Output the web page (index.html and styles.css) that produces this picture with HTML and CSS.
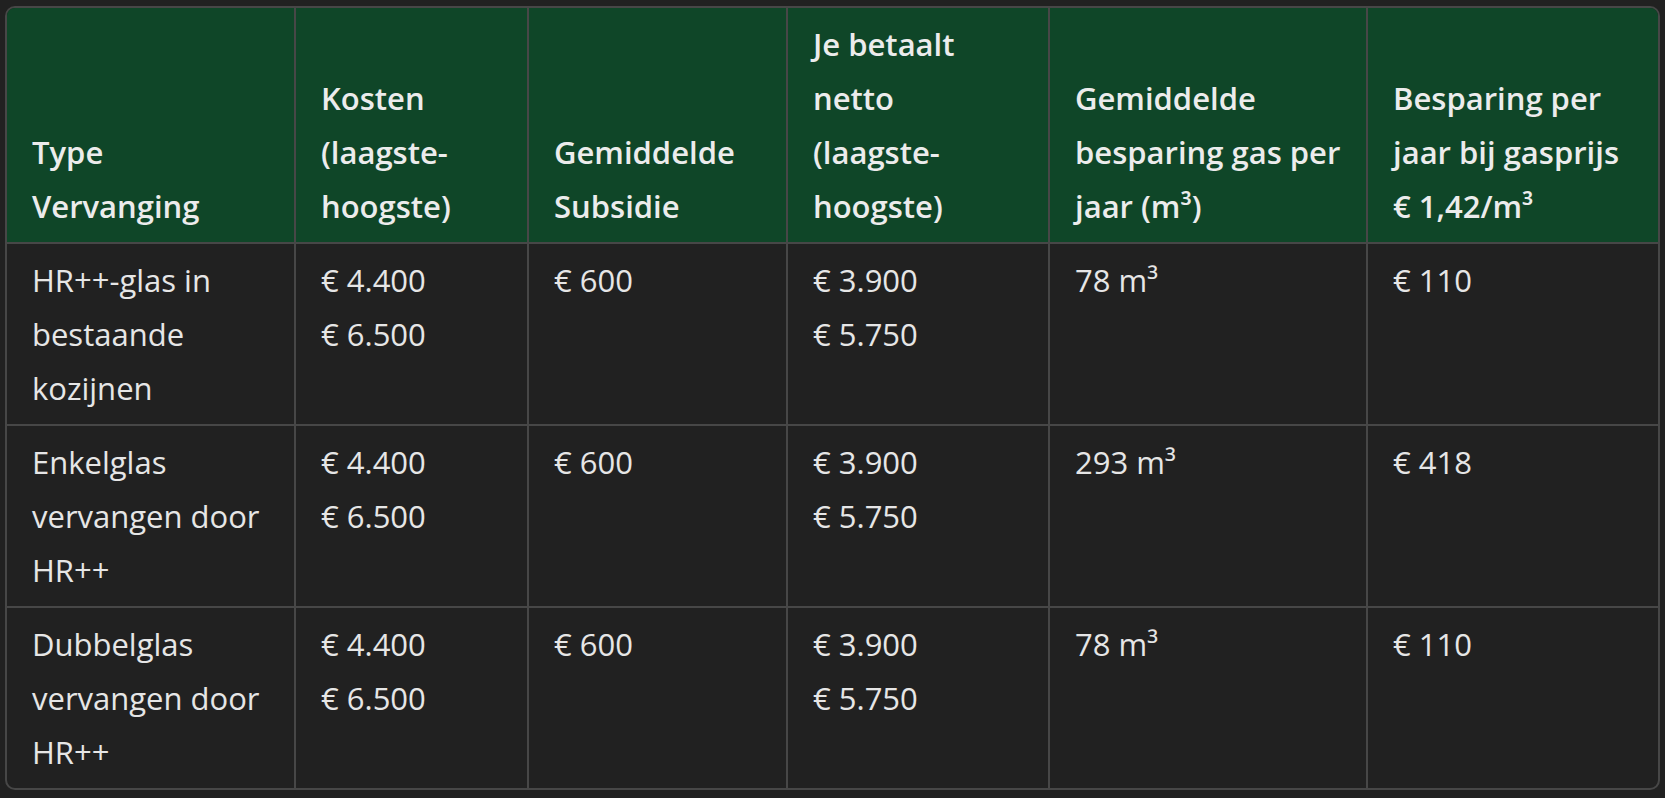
FILE: index.html
```html
<!DOCTYPE html>
<html lang="nl">
<head>
<meta charset="utf-8">
<title>Glas vervangen</title>
<link rel="stylesheet" href="styles.css">
</head>
<body>
<div class="table-wrap">
  <table class="data">
    <colgroup>
      <col class="c1"><col class="c2"><col class="c3"><col class="c4"><col class="c5"><col class="c6">
    </colgroup>
    <thead>
      <tr>
        <th>Type Vervanging</th>
        <th>Kosten (laagste-hoogste)</th>
        <th>Gemiddelde Subsidie</th>
        <th>Je betaalt<br>netto<br>(laagste-hoogste)</th>
        <th>Gemiddelde besparing gas per jaar (m³)</th>
        <th>Besparing per jaar bij gasprijs € 1,42/m³</th>
      </tr>
    </thead>
    <tbody>
      <tr>
        <td>HR++-glas in bestaande kozijnen</td>
        <td>€ 4.400<br>€ 6.500</td>
        <td>€ 600</td>
        <td>€ 3.900<br>€ 5.750</td>
        <td>78 m³</td>
        <td>€ 110</td>
      </tr>
      <tr>
        <td>Enkelglas vervangen door HR++</td>
        <td>€ 4.400<br>€ 6.500</td>
        <td>€ 600</td>
        <td>€ 3.900<br>€ 5.750</td>
        <td>293 m³</td>
        <td>€ 418</td>
      </tr>
      <tr>
        <td>Dubbelglas vervangen door HR++</td>
        <td>€ 4.400<br>€ 6.500</td>
        <td>€ 600</td>
        <td>€ 3.900<br>€ 5.750</td>
        <td>78 m³</td>
        <td>€ 110</td>
      </tr>
    </tbody>
  </table>
</div>
</body>
</html>
```
FILE: styles.css
```css
html, body {
  margin: 0;
  padding: 0;
  background: #212121;
}
body {
  padding: 6px 5px 0 5px;
  font-family: "Open Sans", "Noto Sans", "DejaVu Sans", sans-serif;
}
.table-wrap {
  border: 2px solid #474747;
  border-radius: 10px;
  overflow: hidden;
  background: #212121;
}
.data {
  width: 100%;
  border-collapse: separate;
  border-spacing: 0;
  table-layout: fixed;
  font-size: 31px;
  line-height: 54px;
}
.c1 { width: 289px; }
.c2 { width: 233px; }
.c3 { width: 259px; }
.c4 { width: 262px; }
.c5 { width: 318px; }
.c6 { width: 290px; }
.data th,
.data td {
  padding: 9px 18px 9px 25px;
  border-right: 2px solid #474747;
  border-bottom: 2px solid #474747;
  text-align: left;
}
.data th:last-child,
.data td:last-child {
  border-right: none;
}
.data tbody tr:last-child td {
  border-bottom: none;
}
.data th {
  background: #0f4628;
  color: #ececec;
  font-weight: 600;
  vertical-align: bottom;
}
.data td {
  color: #e6e6e6;
  font-weight: 400;
  vertical-align: top;
}
.plus {
  letter-spacing: 2px;
}
```
